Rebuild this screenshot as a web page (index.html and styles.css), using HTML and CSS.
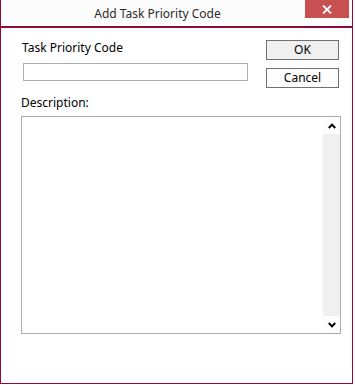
FILE: index.html
```html
<!DOCTYPE html>
<html lang="en">

<head>
    <meta charset="UTF-8">
    <title>Add Task Priority Code</title>
    <link rel="stylesheet" href="styles.css">
</head>

<body>
    <div class="dialog">
        <div class="titlebar">
            <span class="title">Add Task Priority Code</span>
            <div class="close">
                <svg width="10" height="9" viewBox="0 0 10 9">
                    <path d="M1 0.5 L9 8.5 M9 0.5 L1 8.5" stroke="#fff" stroke-width="1.8" fill="none"/>
                </svg>
            </div>
        </div>
        <div class="content">
            <div class="toprow">
                <div class="field">
                    <label class="label">Task Priority Code</label>
                    <div class="input"></div>
                </div>
                <div class="buttons">
                    <div class="btn ok">OK</div>
                    <div class="btn">Cancel</div>
                </div>
            </div>
            <label class="label desc">Description:</label>
            <div class="memo">
                <div class="memo-text"></div>
                <div class="scrollbar">
                    <div class="sb-btn">
                        <svg width="8" height="6" viewBox="0 0 8 6"><path d="M0.8 5 L4 1.6 L7.2 5" stroke="#000" stroke-width="2" fill="none"/></svg>
                    </div>
                    <div class="sb-track"></div>
                    <div class="sb-btn">
                        <svg width="8" height="6" viewBox="0 0 8 6"><path d="M0.8 1 L4 4.4 L7.2 1" stroke="#000" stroke-width="2" fill="none"/></svg>
                    </div>
                </div>
            </div>
        </div>
    </div>
</body>

</html>
```

FILE: styles.css
```css
* {
    margin: 0;
    padding: 0;
    box-sizing: border-box;
}

body {
    background: #fff;
    font-family: "Noto Sans", "Open Sans", sans-serif;
    font-size: 12px;
    color: #000;
}

.dialog {
    width: 353px;
    height: 384px;
    border: solid 1px #8a0b3b;
    border-top: none;
    background: #fff;
    position: relative;
}

.titlebar {
    height: 28px;
    border-bottom: solid 2px #8a0b3b;
    background: #fcfcfc;
    padding-right: 38px;
    text-align: center;
    line-height: 28px;
}

.title {
    font-size: 12px;
    color: #2b2b2b;
}

.close {
    position: absolute;
    left: 304px;
    top: 0;
    width: 44px;
    height: 18px;
    background: #c75050;
    display: flex;
    align-items: center;
    justify-content: center;
}

.content {
    padding: 12px 0 0 20px;
}

.toprow {
    display: flex;
    height: 48px;
}

.field {
    width: 226px;
    margin-left: 1px;
}

.label {
    display: block;
    line-height: 16px;
    height: 16px;
}

.input {
    margin-top: 7px;
    margin-left: 1px;
    height: 18px;
    border: solid 1px #abadb3;
}

.buttons {
    margin-left: 18px;
    display: flex;
    flex-direction: column;
    gap: 8px;
}

.btn {
    width: 73px;
    height: 20px;
    border: solid 1px #707070;
    background: #fdfdfd;
    text-align: center;
    line-height: 18px;
}

.btn.ok {
    background: #f0f0f0;
}

.desc {
    margin-top: 7px;
}

.memo {
    margin-top: 5px;
    width: 320px;
    height: 218px;
    border: solid 1px #abadb3;
    display: flex;
}

.memo-text {
    flex: 1;
}

.scrollbar {
    width: 17px;
    display: flex;
    flex-direction: column;
}

.sb-btn {
    height: 17px;
    background: #fcfcfc;
    display: flex;
    align-items: center;
    justify-content: center;
}

.sb-track {
    flex: 1;
    background: #f0f0f0;
}
```
